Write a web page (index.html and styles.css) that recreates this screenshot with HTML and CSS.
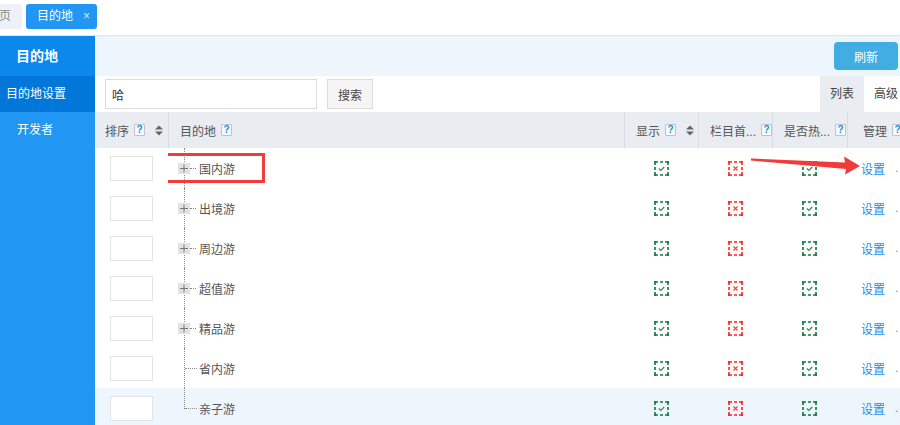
FILE: index.html
```html
<!DOCTYPE html>
<html lang="zh-CN">
<head>
    <meta charset="UTF-8">
    <title>目的地</title>
    <link rel="stylesheet" href="styles.css">
</head>
<body>
    <div class="tabbar">
        <div class="tab tab-home">首页</div>
        <div class="tab tab-active">目的地<span class="tab-close">×</span></div>
    </div>

    <div class="layout">
        <aside class="sidebar">
            <div class="side-title">目的地</div>
            <div class="side-item active">目的地设置</div>
            <div class="side-item">开发者</div>
        </aside>

        <main class="main">
            <div class="toolbar">
                <button class="btn-refresh">刷新</button>
            </div>

            <div class="search-row">
                <input class="search-input" type="text" value="哈">
                <button class="btn-search">搜索</button>
                <div class="view-tabs">
                    <span class="view-tab on">列表</span>
                    <span class="view-tab">高级</span>
                </div>
            </div>

            <div class="grid">
                <div class="row head">
                    <div class="cell c-sort">排序<span class="help">?</span><svg class="sorter" width="8" height="11" viewBox="0 0 8 11"><path d="M0 4.5L4 0.5L8 4.5Z M0 6.5L8 6.5L4 10.5Z" fill="#666"/></svg></div>
                    <div class="cell">目的地<span class="help">?</span></div>
                    <div class="cell">显示<span class="help">?</span><svg class="sorter" width="8" height="11" viewBox="0 0 8 11"><path d="M0 4.5L4 0.5L8 4.5Z M0 6.5L8 6.5L4 10.5Z" fill="#666"/></svg></div>
                    <div class="cell">栏目首...<span class="help">?</span></div>
                    <div class="cell">是否热...<span class="help">?</span></div>
                    <div class="cell c-manage">管理<span class="help">?</span></div>
                </div>

                <div class="row">
                    <div class="cell c-sort"><span class="order-box"></span></div>
                    <div class="cell tree">
                        <span class="toggle"><svg width="12" height="11" viewBox="0 0 12 11"><path d="M2 5.5H10 M6 1.5V9.5" stroke="#777" stroke-width="1"/></svg></span><span class="link-short"></span><span class="name">国内游</span>
                        <span class="mark-box"></span>
                    </div>
                    <div class="cell center"><svg class="flag" width="15" height="15" viewBox="0 0 15 15"><path class="dash ok" d="M0 1H4M6 1H9M11 1H15M0 14H4M6 14H9M11 14H15M1 0V4M1 6V9M1 11V15M14 0V4M14 6V9M14 11V15"/><path d="M4.8 7.6L6.8 9.4L10.2 6" fill="none" stroke="#3f8f5c" stroke-width="1.4"/></svg></div>
                    <div class="cell center"><svg class="flag" width="15" height="15" viewBox="0 0 15 15"><path class="dash no" d="M0 1H4M6 1H9M11 1H15M0 14H4M6 14H9M11 14H15M1 0V4M1 6V9M1 11V15M14 0V4M14 6V9M14 11V15"/><path d="M5.5 5.5L9.5 9.5M9.5 5.5L5.5 9.5" stroke="#f04b4b" stroke-width="1.3"/></svg></div>
                    <div class="cell center"><svg class="flag" width="15" height="15" viewBox="0 0 15 15"><path class="dash ok" d="M0 1H4M6 1H9M11 1H15M0 14H4M6 14H9M11 14H15M1 0V4M1 6V9M1 11V15M14 0V4M14 6V9M14 11V15"/><path d="M4.8 7.6L6.8 9.4L10.2 6" fill="none" stroke="#3f8f5c" stroke-width="1.4"/></svg></div>
                    <div class="cell c-manage"><a class="op">设置</a><span class="more">.</span></div>
                </div>

                <div class="row">
                    <div class="cell c-sort"><span class="order-box"></span></div>
                    <div class="cell tree">
                        <span class="toggle"><svg width="12" height="11" viewBox="0 0 12 11"><path d="M2 5.5H10 M6 1.5V9.5" stroke="#777" stroke-width="1"/></svg></span><span class="link-short"></span><span class="name">出境游</span>
                    </div>
                    <div class="cell center"><svg class="flag" width="15" height="15" viewBox="0 0 15 15"><path class="dash ok" d="M0 1H4M6 1H9M11 1H15M0 14H4M6 14H9M11 14H15M1 0V4M1 6V9M1 11V15M14 0V4M14 6V9M14 11V15"/><path d="M4.8 7.6L6.8 9.4L10.2 6" fill="none" stroke="#3f8f5c" stroke-width="1.4"/></svg></div>
                    <div class="cell center"><svg class="flag" width="15" height="15" viewBox="0 0 15 15"><path class="dash no" d="M0 1H4M6 1H9M11 1H15M0 14H4M6 14H9M11 14H15M1 0V4M1 6V9M1 11V15M14 0V4M14 6V9M14 11V15"/><path d="M5.5 5.5L9.5 9.5M9.5 5.5L5.5 9.5" stroke="#f04b4b" stroke-width="1.3"/></svg></div>
                    <div class="cell center"><svg class="flag" width="15" height="15" viewBox="0 0 15 15"><path class="dash ok" d="M0 1H4M6 1H9M11 1H15M0 14H4M6 14H9M11 14H15M1 0V4M1 6V9M1 11V15M14 0V4M14 6V9M14 11V15"/><path d="M4.8 7.6L6.8 9.4L10.2 6" fill="none" stroke="#3f8f5c" stroke-width="1.4"/></svg></div>
                    <div class="cell c-manage"><a class="op">设置</a><span class="more">.</span></div>
                </div>

                <div class="row">
                    <div class="cell c-sort"><span class="order-box"></span></div>
                    <div class="cell tree">
                        <span class="toggle"><svg width="12" height="11" viewBox="0 0 12 11"><path d="M2 5.5H10 M6 1.5V9.5" stroke="#777" stroke-width="1"/></svg></span><span class="link-short"></span><span class="name">周边游</span>
                    </div>
                    <div class="cell center"><svg class="flag" width="15" height="15" viewBox="0 0 15 15"><path class="dash ok" d="M0 1H4M6 1H9M11 1H15M0 14H4M6 14H9M11 14H15M1 0V4M1 6V9M1 11V15M14 0V4M14 6V9M14 11V15"/><path d="M4.8 7.6L6.8 9.4L10.2 6" fill="none" stroke="#3f8f5c" stroke-width="1.4"/></svg></div>
                    <div class="cell center"><svg class="flag" width="15" height="15" viewBox="0 0 15 15"><path class="dash no" d="M0 1H4M6 1H9M11 1H15M0 14H4M6 14H9M11 14H15M1 0V4M1 6V9M1 11V15M14 0V4M14 6V9M14 11V15"/><path d="M5.5 5.5L9.5 9.5M9.5 5.5L5.5 9.5" stroke="#f04b4b" stroke-width="1.3"/></svg></div>
                    <div class="cell center"><svg class="flag" width="15" height="15" viewBox="0 0 15 15"><path class="dash ok" d="M0 1H4M6 1H9M11 1H15M0 14H4M6 14H9M11 14H15M1 0V4M1 6V9M1 11V15M14 0V4M14 6V9M14 11V15"/><path d="M4.8 7.6L6.8 9.4L10.2 6" fill="none" stroke="#3f8f5c" stroke-width="1.4"/></svg></div>
                    <div class="cell c-manage"><a class="op">设置</a><span class="more">.</span></div>
                </div>

                <div class="row">
                    <div class="cell c-sort"><span class="order-box"></span></div>
                    <div class="cell tree">
                        <span class="toggle"><svg width="12" height="11" viewBox="0 0 12 11"><path d="M2 5.5H10 M6 1.5V9.5" stroke="#777" stroke-width="1"/></svg></span><span class="link-short"></span><span class="name">超值游</span>
                    </div>
                    <div class="cell center"><svg class="flag" width="15" height="15" viewBox="0 0 15 15"><path class="dash ok" d="M0 1H4M6 1H9M11 1H15M0 14H4M6 14H9M11 14H15M1 0V4M1 6V9M1 11V15M14 0V4M14 6V9M14 11V15"/><path d="M4.8 7.6L6.8 9.4L10.2 6" fill="none" stroke="#3f8f5c" stroke-width="1.4"/></svg></div>
                    <div class="cell center"><svg class="flag" width="15" height="15" viewBox="0 0 15 15"><path class="dash no" d="M0 1H4M6 1H9M11 1H15M0 14H4M6 14H9M11 14H15M1 0V4M1 6V9M1 11V15M14 0V4M14 6V9M14 11V15"/><path d="M5.5 5.5L9.5 9.5M9.5 5.5L5.5 9.5" stroke="#f04b4b" stroke-width="1.3"/></svg></div>
                    <div class="cell center"><svg class="flag" width="15" height="15" viewBox="0 0 15 15"><path class="dash ok" d="M0 1H4M6 1H9M11 1H15M0 14H4M6 14H9M11 14H15M1 0V4M1 6V9M1 11V15M14 0V4M14 6V9M14 11V15"/><path d="M4.8 7.6L6.8 9.4L10.2 6" fill="none" stroke="#3f8f5c" stroke-width="1.4"/></svg></div>
                    <div class="cell c-manage"><a class="op">设置</a><span class="more">.</span></div>
                </div>

                <div class="row">
                    <div class="cell c-sort"><span class="order-box"></span></div>
                    <div class="cell tree">
                        <span class="toggle"><svg width="12" height="11" viewBox="0 0 12 11"><path d="M2 5.5H10 M6 1.5V9.5" stroke="#777" stroke-width="1"/></svg></span><span class="link-short"></span><span class="name">精品游</span>
                    </div>
                    <div class="cell center"><svg class="flag" width="15" height="15" viewBox="0 0 15 15"><path class="dash ok" d="M0 1H4M6 1H9M11 1H15M0 14H4M6 14H9M11 14H15M1 0V4M1 6V9M1 11V15M14 0V4M14 6V9M14 11V15"/><path d="M4.8 7.6L6.8 9.4L10.2 6" fill="none" stroke="#3f8f5c" stroke-width="1.4"/></svg></div>
                    <div class="cell center"><svg class="flag" width="15" height="15" viewBox="0 0 15 15"><path class="dash no" d="M0 1H4M6 1H9M11 1H15M0 14H4M6 14H9M11 14H15M1 0V4M1 6V9M1 11V15M14 0V4M14 6V9M14 11V15"/><path d="M5.5 5.5L9.5 9.5M9.5 5.5L5.5 9.5" stroke="#f04b4b" stroke-width="1.3"/></svg></div>
                    <div class="cell center"><svg class="flag" width="15" height="15" viewBox="0 0 15 15"><path class="dash ok" d="M0 1H4M6 1H9M11 1H15M0 14H4M6 14H9M11 14H15M1 0V4M1 6V9M1 11V15M14 0V4M14 6V9M14 11V15"/><path d="M4.8 7.6L6.8 9.4L10.2 6" fill="none" stroke="#3f8f5c" stroke-width="1.4"/></svg></div>
                    <div class="cell c-manage"><a class="op">设置</a><span class="more">.</span></div>
                </div>

                <div class="row">
                    <div class="cell c-sort"><span class="order-box"></span></div>
                    <div class="cell tree leaf">
                        <span class="link-long"></span><span class="name">省内游</span>
                    </div>
                    <div class="cell center"><svg class="flag" width="15" height="15" viewBox="0 0 15 15"><path class="dash ok" d="M0 1H4M6 1H9M11 1H15M0 14H4M6 14H9M11 14H15M1 0V4M1 6V9M1 11V15M14 0V4M14 6V9M14 11V15"/><path d="M4.8 7.6L6.8 9.4L10.2 6" fill="none" stroke="#3f8f5c" stroke-width="1.4"/></svg></div>
                    <div class="cell center"><svg class="flag" width="15" height="15" viewBox="0 0 15 15"><path class="dash no" d="M0 1H4M6 1H9M11 1H15M0 14H4M6 14H9M11 14H15M1 0V4M1 6V9M1 11V15M14 0V4M14 6V9M14 11V15"/><path d="M5.5 5.5L9.5 9.5M9.5 5.5L5.5 9.5" stroke="#f04b4b" stroke-width="1.3"/></svg></div>
                    <div class="cell center"><svg class="flag" width="15" height="15" viewBox="0 0 15 15"><path class="dash ok" d="M0 1H4M6 1H9M11 1H15M0 14H4M6 14H9M11 14H15M1 0V4M1 6V9M1 11V15M14 0V4M14 6V9M14 11V15"/><path d="M4.8 7.6L6.8 9.4L10.2 6" fill="none" stroke="#3f8f5c" stroke-width="1.4"/></svg></div>
                    <div class="cell c-manage"><a class="op">设置</a><span class="more">.</span></div>
                </div>

                <div class="row hover">
                    <div class="cell c-sort"><span class="order-box"></span></div>
                    <div class="cell tree leaf last">
                        <span class="link-long"></span><span class="name">亲子游</span>
                    </div>
                    <div class="cell center"><svg class="flag" width="15" height="15" viewBox="0 0 15 15"><path class="dash ok" d="M0 1H4M6 1H9M11 1H15M0 14H4M6 14H9M11 14H15M1 0V4M1 6V9M1 11V15M14 0V4M14 6V9M14 11V15"/><path d="M4.8 7.6L6.8 9.4L10.2 6" fill="none" stroke="#3f8f5c" stroke-width="1.4"/></svg></div>
                    <div class="cell center"><svg class="flag" width="15" height="15" viewBox="0 0 15 15"><path class="dash no" d="M0 1H4M6 1H9M11 1H15M0 14H4M6 14H9M11 14H15M1 0V4M1 6V9M1 11V15M14 0V4M14 6V9M14 11V15"/><path d="M5.5 5.5L9.5 9.5M9.5 5.5L5.5 9.5" stroke="#f04b4b" stroke-width="1.3"/></svg></div>
                    <div class="cell center"><svg class="flag" width="15" height="15" viewBox="0 0 15 15"><path class="dash ok" d="M0 1H4M6 1H9M11 1H15M0 14H4M6 14H9M11 14H15M1 0V4M1 6V9M1 11V15M14 0V4M14 6V9M14 11V15"/><path d="M4.8 7.6L6.8 9.4L10.2 6" fill="none" stroke="#3f8f5c" stroke-width="1.4"/></svg></div>
                    <div class="cell c-manage"><a class="op">设置</a><span class="more">.</span></div>
                </div>
            </div>
        </main>
    </div>

    <!-- annotation arrow drawn over the screenshot -->
    <svg class="arrow" width="900" height="425" viewBox="0 0 900 425">
        <polygon points="751,158.5 845,162.5 844,156.5 860,166 845,174.5 846,169 751,160.5" fill="#f23a3a"/>
    </svg>
</body>
</html>
```

FILE: styles.css
```css
* {
    margin: 0;
    padding: 0;
    box-sizing: border-box;
}

body {
    width: 900px;
    height: 425px;
    overflow: hidden;
    font-family: 'Liberation Sans', 'Noto Sans CJK SC', sans-serif;
    font-size: 12px;
    color: #555;
    background: #fff;
    position: relative;
}

/* top tabs */
.tabbar {
    height: 36px;
    display: flex;
    align-items: flex-start;
    padding-top: 4px;
    gap: 4px;
    border-bottom: 1px solid #dfe5ec;
}

.tab {
    height: 25px;
    line-height: 25px;
    border-radius: 3px;
    white-space: nowrap;
}

.tab-home {
    margin-left: -24px;
    padding: 0 11px;
    background: #eef2f8;
    color: #888;
}

.tab-active {
    padding: 0 7px 0 11px;
    background: #2196f3;
    color: #fff;
}

.tab-close {
    margin-left: 10px;
    font-size: 12px;
    color: #d6ebff;
}

.layout {
    display: flex;
    height: 389px;
}

/* left menu */
.sidebar {
    width: 95px;
    flex-shrink: 0;
    background: #2196f3;
    color: #fff;
}

.side-title {
    height: 40px;
    line-height: 40px;
    padding-left: 16px;
    font-size: 14px;
    font-weight: bold;
    background: #0a88ec;
}

.side-item {
    height: 36px;
    line-height: 36px;
    padding-left: 17px;
}

.side-item.active {
    padding-left: 6px;
    background: #0077d9;
}

/* content */
.main {
    flex: 1;
    overflow: hidden;
}

.toolbar {
    height: 40px;
    background: #eef6fd;
    display: flex;
    justify-content: flex-end;
    align-items: center;
    padding-right: 2px;
}

.btn-refresh {
    width: 64px;
    height: 28px;
    border: none;
    border-radius: 4px;
    background: #42ade3;
    color: #fff;
    font-family: inherit;
    font-size: 12px;
}

.search-row {
    height: 36px;
    display: flex;
    align-items: center;
    padding-left: 10px;
}

.search-input {
    width: 212px;
    height: 30px;
    border: 1px solid #dcdcdc;
    padding-left: 6px;
    font-family: inherit;
    font-size: 12px;
    color: #333;
    outline: none;
}

.btn-search {
    width: 46px;
    height: 30px;
    margin-left: 10px;
    border: 1px solid #dcdcdc;
    background: #f5f5f5;
    color: #444;
    font-family: inherit;
    font-size: 12px;
}

.view-tabs {
    margin-left: auto;
    display: flex;
    height: 36px;
    width: 80px;
    flex-shrink: 0;
}

.view-tab {
    line-height: 36px;
    padding: 0 10px;
    color: #444;
    white-space: nowrap;
}

.view-tab.on {
    width: 44px;
    background: #e9ecf0;
}

/* table */
.grid {
    width: 832px;
}

.row {
    display: grid;
    grid-template-columns: 73px 456px 74px 74px 75px 80px;
    height: 40px;
}

.row.head {
    height: 36px;
    background: #e9ecf0;
}

.row.hover {
    background: #eef6fd;
}

.cell {
    display: flex;
    align-items: center;
    padding-left: 11px;
    overflow: hidden;
    white-space: nowrap;
}

.head .cell + .cell {
    border-left: 1px solid #d8dde3;
}

.head .c-sort {
    padding-left: 10px;
}

.head .c-manage {
    padding-left: 15px;
}

.help {
    display: inline-block;
    flex-shrink: 0;
    width: 11px;
    height: 12px;
    margin-left: 5px;
    border: 1px solid #bcc3ca;
    border-radius: 1px;
    background: #f7f9fb;
    color: #1a8fe0;
    font-size: 10px;
    font-weight: bold;
    line-height: 10px;
    text-align: center;
}

.sorter {
    margin-left: 10px;
    flex-shrink: 0;
}

.order-box {
    display: block;
    width: 43px;
    height: 25px;
    margin-left: 4px;
    border: 1px solid #e4e4e4;
    background: #fff;
}

/* tree column */
.tree {
    position: relative;
    padding-left: 10px;
}

.tree::before {
    content: "";
    position: absolute;
    left: 16px;
    top: 0;
    bottom: 0;
    border-left: 1px dotted #8a8a8a;
}

.tree.last::before {
    bottom: 19px;
}

.toggle {
    position: relative;
    display: block;
    width: 12px;
    height: 11px;
    background: #e2e2e2;
}

.toggle svg {
    display: block;
}

.link-short {
    width: 6px;
    border-top: 1px dotted #8a8a8a;
    margin-top: 1px;
}

.leaf {
    padding-left: 17px;
}

.link-long {
    width: 12px;
    border-top: 1px dotted #8a8a8a;
    margin-top: 1px;
}

.name {
    margin-left: 3px;
    color: #555;
}

.leaf .name {
    margin-left: 2px;
}

.mark-box {
    position: absolute;
    left: -4px;
    top: 5px;
    width: 101px;
    height: 30px;
    border: 3px solid #f23c3c;
}

.center {
    justify-content: center;
    padding-left: 0;
}

.flag {
    display: block;
}

.dash {
    fill: none;
    stroke-width: 1.6;
}

.dash.ok {
    stroke: #13773a;
}

.dash.no {
    stroke: #ff2020;
}

.c-manage {
    padding-left: 14px;
}

.op {
    color: #1a8fe6;
    cursor: pointer;
}

.more {
    margin-left: 10px;
    color: #a08668;
}

.arrow {
    position: absolute;
    left: 0;
    top: 0;
    pointer-events: none;
}
```
